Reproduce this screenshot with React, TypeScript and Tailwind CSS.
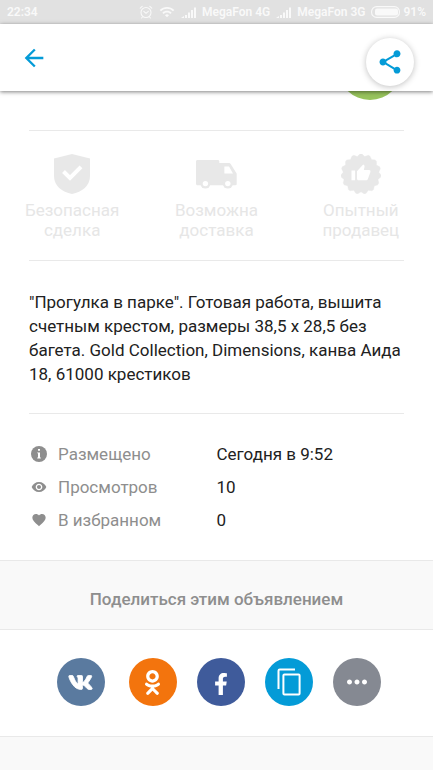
import type { ReactNode } from 'react';
import { MdArrowBack, MdFavorite, MdMoreHoriz, MdRemoveRedEye, MdShare, MdWifi } from 'react-icons/md';
import { FaFacebookF, FaOdnoklassniki, FaVk } from 'react-icons/fa';

interface IconProps {
  className?: string;
}

function AlarmIcon() {
  return (
    <svg viewBox="0 0 14 14" className="h-3.5 w-3.5" fill="none" stroke="currentColor" strokeLinecap="round">
      <circle cx="7" cy="7.5" r="5" strokeWidth="1.1" />
      <path d="M4.8 6.4 7 8.3l2.3-1.9M1.2 3.2l2-1.8M12.8 3.2l-2-1.8M3.4 12l-.8 1M10.6 12l.8 1" strokeWidth="1.1" />
    </svg>
  );
}

function SignalIcon() {
  return (
    <svg viewBox="0 0 15 11" className="h-[11px] w-[15px]" fill="currentColor">
      <path d="M0 11 3 9v2zM4 8h2v3H4zM7 5.5h2V11H7zM10 3h2v8h-2zM13 .5h2V11h-2z" />
    </svg>
  );
}

function BatteryIcon() {
  return (
    <svg viewBox="0 0 29 12" className="h-3 w-[29px]">
      <rect x=".6" y=".6" width="27.8" height="10.8" rx="5" fill="none" stroke="currentColor" strokeWidth="1.1" />
      <rect x="4" y="2.4" width="23" height="7.2" rx="2" fill="currentColor" />
    </svg>
  );
}

function ShieldIcon({ className }: IconProps) {
  return (
    <svg viewBox="0 0 36 40" className={className}>
      <path d="M18 0 36 4.5V22c0 10-8 16-18 18C8 38 0 32 0 22V4.5z" fill="currentColor" />
      <path d="m9.5 17.5 6.5 6.5L27 12.8" fill="none" stroke="#fff" strokeWidth="4" />
    </svg>
  );
}

function TruckIcon({ className }: IconProps) {
  return (
    <svg viewBox="0 0 41 29" className={className}>
      <g fill="currentColor">
        <path d="M1.5 0h20.3c.9 0 1.5.6 1.5 1.5V3h9.9c.6 0 1 .2 1.3.7l5.8 9.2c.3.4.4.8.4 1.3V24c0 .8-.5 1.2-1.2 1.2H1.5C.6 25.2 0 24.6 0 23.7V1.5C0 .6.6 0 1.5 0z" />
        <circle cx="9.4" cy="23.6" r="5" />
        <circle cx="31.8" cy="23.6" r="5" />
      </g>
      <g fill="#fff">
        <path d="M28.4 6.4h4.6l4 7.1h-8.6z" />
        <circle cx="9.4" cy="23.6" r="2.7" />
        <circle cx="31.8" cy="23.6" r="2.7" />
      </g>
    </svg>
  );
}

// Scalloped edge of the seller badge
const BADGE_TEETH = 15;
const BADGE_PATH =
  Array.from({ length: BADGE_TEETH }, (_, i) => {
    const step = (Math.PI * 2) / BADGE_TEETH;
    const a = i * step - Math.PI / 2;
    const point = (angle: number, r: number) =>
      `${(20 + r * Math.cos(angle)).toFixed(2)} ${(20 + r * Math.sin(angle)).toFixed(2)}`;
    return `${i === 0 ? 'M' : 'L'}${point(a - step * 0.12, 20)}L${point(a + step * 0.12, 20)}L${point(a + step * 0.5, 17.8)}`;
  }).join('') + 'Z';

function BadgeIcon({ className }: IconProps) {
  return (
    <svg viewBox="0 0 40 40" className={className}>
      <path d={BADGE_PATH} fill="currentColor" stroke="currentColor" strokeWidth=".4" strokeLinejoin="round" />
      <path
        d="M10.5 16.5h3.6v9.8h-3.6zM16 17.2l6.2-6.6c1.3.5 1.5 1.5 1.3 2.5l-.7 3h5.3c1.1 0 1.6.9 1.3 1.9l-2.5 7c-.3.9-.9 1.3-1.8 1.3H17.5c-1 0-1.5-.6-1.5-1.5z"
        fill="#fff"
      />
    </svg>
  );
}

function InfoIcon({ className }: IconProps) {
  return (
    <svg viewBox="0 0 16 16" className={className}>
      <circle cx="8" cy="8" r="8" fill="currentColor" />
      <path d="M7 3h2v1.8H7zM6.2 6.4H9v5.2h.8v.9H6.2v-.9H7V7.3h-.8z" fill="#fff" />
    </svg>
  );
}

function CopyIcon({ className }: IconProps) {
  return (
    <svg viewBox="0 0 24 28" className={className} fill="none" stroke="currentColor" strokeWidth="2">
      <path d="M1.5 21V2.7c0-.7.5-1.2 1.2-1.2H18" />
      <rect x="6.4" y="6.4" width="16.2" height="20.2" rx="1" />
    </svg>
  );
}

function StatusBar() {
  return (
    <div className="flex h-6 items-center justify-between bg-[#e1e1e1] pr-[7px] pl-[7px] text-xs font-semibold text-[#f9f9f9]">
      <span>22:34</span>
      <div className="flex items-center gap-1.5">
        <AlarmIcon />
        <MdWifi className="h-4 w-4" />
        <SignalIcon />
        <span>MegaFon 4G</span>
        <SignalIcon />
        <span>MegaFon 3G</span>
        <div className="flex items-center gap-[3px]">
          <BatteryIcon />
          <span>91%</span>
        </div>
      </div>
    </div>
  );
}

function Feature({ icon, first, second }: { icon: ReactNode; first: string; second: string }) {
  return (
    <li className="flex flex-1 flex-col items-center">
      <div className="flex h-10 items-center text-[#e8e8e8]">{icon}</div>
      <p className="mt-1.5 text-center text-[17px] leading-5 text-[#e6e6e6]">
        {first}
        <br />
        {second}
      </p>
    </li>
  );
}

const STATS = [
  { label: 'Размещено', value: 'Сегодня в 9:52', icon: <InfoIcon className="h-4 w-4" /> },
  { label: 'Просмотров', value: '10', icon: <MdRemoveRedEye className="h-4 w-4" /> },
  { label: 'В избранном', value: '0', icon: <MdFavorite className="h-4 w-4" /> },
];

const SHARE_TARGETS = [
  { name: 'ВКонтакте', style: 'mr-1 bg-[#5a7a9f]', icon: <FaVk className="h-[25px] w-[25px] stroke-current stroke-[20px]" /> },
  { name: 'Одноклассники', style: 'bg-[#f3740d]', icon: <FaOdnoklassniki className="h-[25px] w-[25px]" /> },
  { name: 'Facebook', style: 'bg-[#3f5b9b] pt-1', icon: <FaFacebookF className="h-[22px] w-[22px]" /> },
  { name: 'Скопировать ссылку', style: 'bg-[#049bd7]', icon: <CopyIcon className="h-7 w-6" /> },
  { name: 'Ещё', style: 'bg-[#858992]', icon: <MdMoreHoriz className="h-[30px] w-[30px]" /> },
];

export default function App() {
  return (
    <div className="flex min-h-screen flex-col bg-white font-[Roboto,sans-serif] text-[#212121]">
      <StatusBar />

      {/* Toolbar */}
      <header className="relative z-10 flex h-[67px] items-start justify-between bg-white pt-3.5 pr-[19px] pl-5 shadow-[0_1px_4px_rgba(0,0,0,0.5)]">
        <button type="button" aria-label="Назад" className="mt-1.5 text-[#049bd7]">
          <MdArrowBack className="h-7 w-7" />
        </button>
        <button
          type="button"
          aria-label="Поделиться"
          className="flex h-12 w-12 items-center justify-center rounded-full bg-white text-[#049bd7] shadow-[0_1px_6px_rgba(0,0,0,0.25)]"
        >
          <MdShare className="h-7 w-7" />
        </button>
      </header>

      <main className="flex flex-1 flex-col">
        {/* Seller avatar, scrolled under the toolbar */}
        <div className="flex h-[9px] items-end justify-end overflow-hidden pr-[31px]">
          <div className="h-16 w-16 shrink-0 rounded-full bg-[#97c35c]" />
        </div>

        <hr className="mx-[29px] mt-[30px] border-[#e9e9e9]" />
        <ul className="flex pt-[23px] pb-5">
          <Feature icon={<ShieldIcon className="h-10 w-9" />} first="Безопасная" second="сделка" />
          <Feature icon={<TruckIcon className="h-[29px] w-[41px]" />} first="Возможна" second="доставка" />
          <Feature icon={<BadgeIcon className="h-10 w-10" />} first="Опытный" second="продавец" />
        </ul>

        <hr className="mx-[29px] border-[#e9e9e9]" />
        <p className="px-[29px] pt-[29px] pb-[27px] text-[17px] leading-6">
          "Прогулка в парке". Готовая работа, вышита счетным крестом, размеры 38,5 х 28,5 без багета. Gold Collection,
          Dimensions, канва Аида 18, 61000 крестиков
        </p>

        <hr className="mx-[29px] border-[#e9e9e9]" />
        <dl className="px-[29px] pt-6 pb-[23px]">
          {STATS.map((stat) => (
            <div key={stat.label} className="flex h-[33px] items-center text-[17px]">
              <dt className="flex w-1/2 items-center gap-2.5 text-[#8e8e8e]">
                <span className="flex w-[19px] justify-center pb-0.5">{stat.icon}</span>
                {stat.label}
              </dt>
              <dd>{stat.value}</dd>
            </div>
          ))}
        </dl>

        {/* Share */}
        <h2 className="flex h-[70px] items-center justify-center border-y border-[#e9e9e9] bg-[#f9f9f9] pt-2.5 text-[17px] font-medium text-[#8e8e8e]">
          Поделиться этим объявлением
        </h2>
        <div className="flex justify-center gap-5 pt-7 pb-[30px] pl-1 text-white">
          {SHARE_TARGETS.map((target) => (
            <button
              key={target.name}
              type="button"
              aria-label={target.name}
              className={`flex h-12 w-12 items-center justify-center rounded-full ${target.style}`}
            >
              {target.icon}
            </button>
          ))}
        </div>
        <div className="min-h-8 flex-1 border-t border-[#e9e9e9] bg-[#f9f9f9]" />
      </main>
    </div>
  );
}
